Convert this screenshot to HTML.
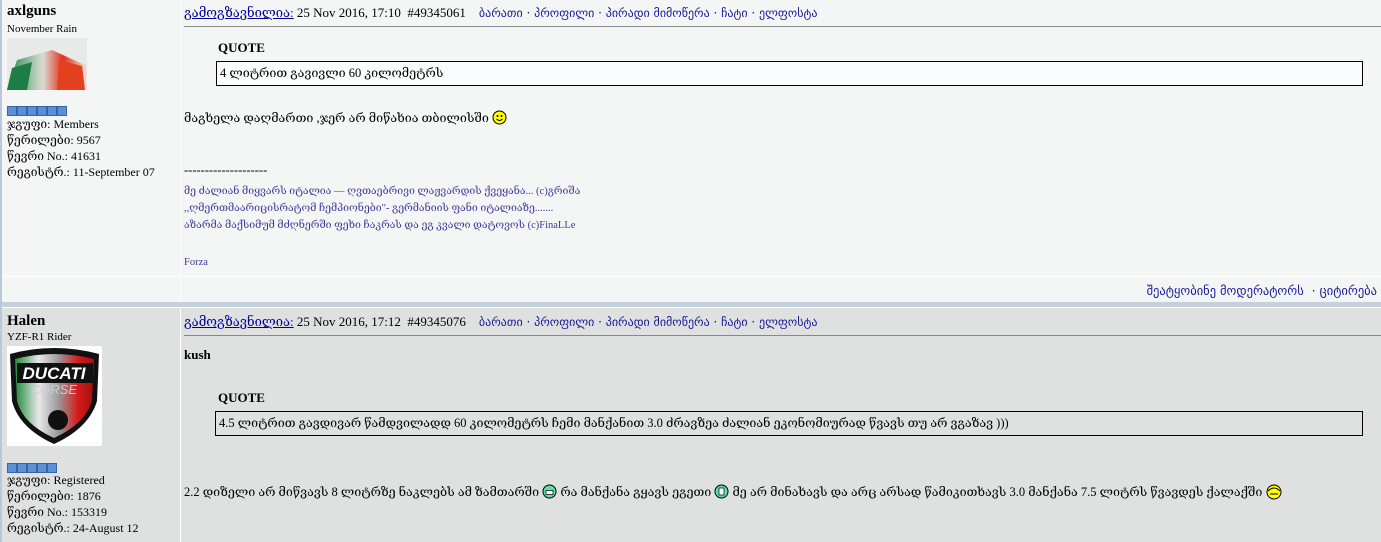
<!DOCTYPE html>
<html><head><meta charset="utf-8">
<style>
*{margin:0;padding:0;box-sizing:border-box}
body{width:1381px;height:542px;overflow:hidden;background:#f4f5f5;position:relative;font-family:"Liberation Serif","DejaVu Serif",serif;font-size:12.5px;color:#000}
.a{position:absolute;white-space:nowrap}
.lnk{color:#000099}
.u{text-decoration:underline}
.nav{font-family:"DejaVu Sans","Liberation Sans",sans-serif;font-size:12px;color:#1a1a99}
.sig{color:#3d3a99;font-size:10.5px}
.pips span{display:inline-block;width:10px;height:10px;background:#5b8fd6;border:1px solid #3a62a8;margin-right:0}
.q{position:absolute;border:1px solid #000;padding:3px 3px;white-space:nowrap}
.hd{font-size:13px}
</style></head><body>
<div class="a" style="left:0;top:0;width:2px;height:542px;background:#b9c8dc"></div>
<div class="a" style="left:180px;top:0;width:1px;height:302px;background:#fff"></div>
<div class="a" style="left:2px;top:276px;width:1379px;height:1px;background:#fff"></div>
<div class="a" style="left:2px;top:302px;width:1379px;height:5px;background:#c4d0dc"></div>
<div class="a" style="left:2px;top:307px;width:1379px;height:1px;background:#fff"></div>
<div class="a" style="left:2px;top:308px;width:1379px;height:234px;background:#dfe0e0"></div>
<div class="a" style="left:180px;top:308px;width:1px;height:234px;background:#fff"></div>

<div class="a" style="left:7px;top:3px;font-size:15px;font-weight:bold">axlguns</div>
<div class="a" style="left:7px;top:23px;font-size:11px">November Rain</div>
<svg class="a" style="left:7px;top:38px" width="80" height="52">
<defs><linearGradient id="s" x1="0" x2="1"><stop offset="0" stop-color="#1a8a4a"/><stop offset=".45" stop-color="#dcdcd4"/><stop offset=".7" stop-color="#e0321e"/><stop offset="1" stop-color="#e8e4e0"/></linearGradient></defs>
<rect width="80" height="52" fill="#e8eaea"/>
<path d="M0 52 L10 22 L45 12 L80 28 L80 52Z" fill="url(#s)"/>
<path d="M0 52 L5 30 L25 24 L20 52Z" fill="#1e7d45"/>
<path d="M50 52 L52 22 L75 28 L78 52Z" fill="#e2401f"/>
</svg>
<div class="a pips" style="left:7px;top:105px"><span></span><span></span><span></span><span></span><span></span><span></span></div>
<div class="a" style="left:7px;top:116px;line-height:16px;font-size:12px">ჯგუფი: Members<br>წერილები: 9567<br>წევრი No.: 41631<br>რეგისტრ.: 11-September 07</div>

<div class="a hd" style="left:184px;top:5px"><span class="lnk u">გამოგზავნილია:</span> 25 Nov 2016, 17:10 &nbsp;#49345061 &nbsp;&nbsp;&nbsp;<span class="nav">ბარათი · პროფილი · პირადი მიმოწერა · ჩატი · ელფოსტა</span></div>
<div class="a" style="left:184px;top:26px;width:1197px;height:1px;background:#888"></div>
<div class="a" style="left:218px;top:40px;font-weight:bold;font-size:13px">QUOTE</div>
<div class="q" style="left:216px;top:61px;width:1147px;height:25px;background:#fbfcfd">4 ლიტრით გავივლი 60 კილომეტრს</div>
<div class="a" style="left:184px;top:110px">მაგხელა დაღმართი ,ჯერ არ მიწახია თბილისში <svg width="15" height="15" style="vertical-align:-3px"><circle cx="7.5" cy="7.5" r="6.5" fill="#ff0" stroke="#000"/><circle cx="5.5" cy="6" r="1" fill="#000"/><circle cx="9.5" cy="6" r="1" fill="#000"/><path d="M4.5 9 Q7.5 12 10.5 9" stroke="#000" fill="none"/></svg></div>
<div class="a" style="left:184px;top:163px">--------------------</div>
<div class="a sig" style="left:184px;top:183px;line-height:17px">მე ძალიან მიყვარს იტალია — ღვთაებრივი ლაჟვარდის ქვეყანა... (c)გრიშა<br>,,ღმერთმაარიცისრატომ ჩემპიონები"- გერმანიის ფანი იტალიაზე.......<br>აზარმა მაქსიმუმ მძღნერში ფეხი ჩაკრას და ეგ კვალი დატოვოს (c)FinaLLe</div>
<div class="a sig" style="left:184px;top:257px">Forza</div>
<div class="a nav" style="right:4px;top:283px;font-size:12.5px">შეატყობინე მოდერატორს &nbsp;· ციტირება</div>

<div class="a" style="left:7px;top:313px;font-size:15px;font-weight:bold">Halen</div>
<div class="a" style="left:7px;top:331px;font-size:11px">YZF-R1 Rider</div>
<svg class="a" style="left:7px;top:346px" width="95" height="100">
<rect width="95" height="100" fill="#fff"/>
<defs><linearGradient id="it" x1="0" x2="1"><stop offset="0" stop-color="#1f8a3c"/><stop offset=".3" stop-color="#e8e8e8"/><stop offset=".55" stop-color="#999"/><stop offset=".8" stop-color="#d61a1a"/><stop offset="1" stop-color="#a01010"/></linearGradient></defs>
<path d="M3 8 Q47 -4 92 8 L90 55 Q82 82 47 98 Q12 82 5 55Z" fill="#111"/>
<path d="M8 13 Q47 3 87 13 L85 55 Q78 78 47 92 Q16 78 10 55Z" fill="url(#it)"/>
<rect x="10" y="17" width="76" height="20" fill="#111"/>
<text x="47" y="33" font-family="Liberation Sans" font-weight="bold" font-style="italic" font-size="17" fill="#fff" text-anchor="middle">DUCATI</text>
<text x="47" y="48" font-family="Liberation Sans" font-style="italic" font-size="13" fill="#ccc" text-anchor="middle">CORSE</text>
<circle cx="51" cy="74" r="10" fill="#111"/>
</svg>
<div class="a pips" style="left:7px;top:462px"><span></span><span></span><span></span><span></span><span></span></div>
<div class="a" style="left:7px;top:472px;line-height:16px;font-size:12px">ჯგუფი: Registered<br>წერილები: 1876<br>წევრი No.: 153319<br>რეგისტრ.: 24-August 12</div>

<div class="a hd" style="left:184px;top:314px"><span class="lnk u">გამოგზავნილია:</span> 25 Nov 2016, 17:12 &nbsp;#49345076 &nbsp;&nbsp;&nbsp;<span class="nav">ბარათი · პროფილი · პირადი მიმოწერა · ჩატი · ელფოსტა</span></div>
<div class="a" style="left:184px;top:335px;width:1197px;height:1px;background:#888"></div>
<div class="a" style="left:184px;top:347px;font-weight:bold;font-size:13px">kush</div>
<div class="a" style="left:218px;top:390px;font-weight:bold;font-size:13px">QUOTE</div>
<div class="q" style="left:215px;top:411px;width:1148px;height:25px">4.5 ლიტრით გავდივარ წამდვილადდ 60 კილომეტრს ჩემი მანქანით 3.0 ძრავზეა ძალიან ეკონომიურად წვავს თუ არ ვგაზავ )))</div>
<div class="a" style="left:184px;top:484px">2.2 დიზელი არ მიწვავს 8 ლიტრზე ნაკლებს ამ ზამთარში <svg width="15" height="15" style="vertical-align:-3px"><circle cx="7.5" cy="7.5" r="6.5" fill="#5fe0b0" stroke="#000"/><rect x="4" y="6.5" width="7" height="4" fill="#fff" stroke="#000" stroke-width=".7"/></svg> რა მანქანა გყავს ეგეთი <svg width="15" height="15" style="vertical-align:-3px"><circle cx="7.5" cy="7.5" r="6.5" fill="#5fe0b0" stroke="#000"/><rect x="5" y="4" width="5" height="7" fill="#fff" stroke="#000" stroke-width=".7"/></svg> მე არ მინახავს და არც არსად წამიკითხავს 3.0 მანქანა 7.5 ლიტრს წვავდეს ქალაქში <svg width="18" height="16" style="vertical-align:-4px"><circle cx="9" cy="8" r="7" fill="#ff0" stroke="#000"/><path d="M3 7 Q9 1 15 7" stroke="#000" fill="none"/><path d="M5 10 L13 10" stroke="#000"/></svg></div>
</body></html>
